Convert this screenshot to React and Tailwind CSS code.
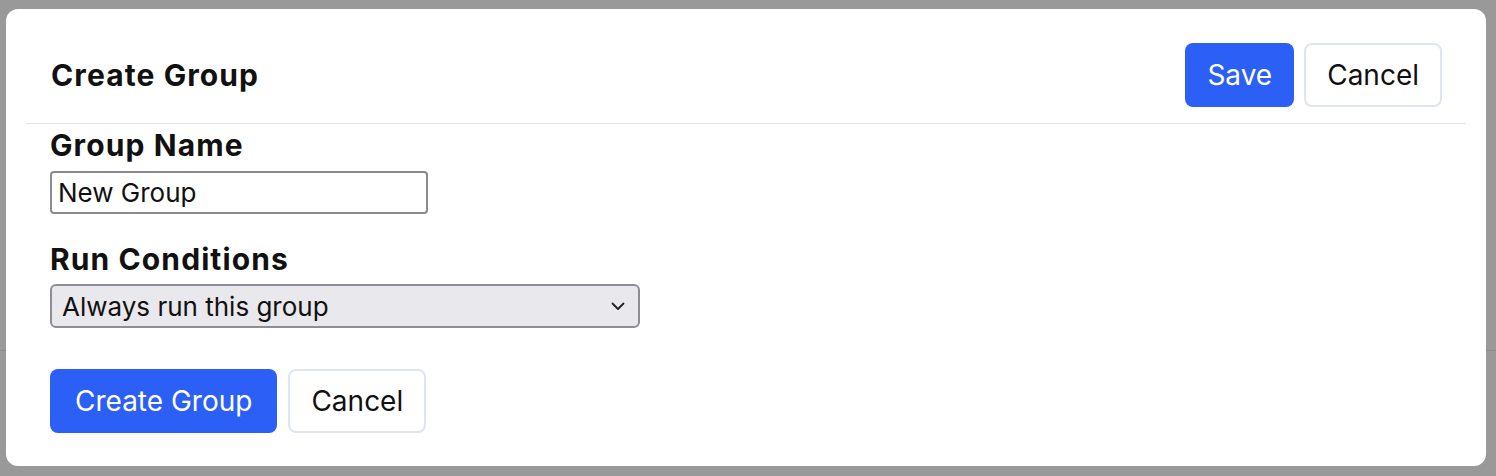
import React, { useState } from "react";

const font = { fontFamily: "Inter, 'Noto Sans', sans-serif" };

const Chevron = () => (
  <svg width="14" height="9" viewBox="0 0 14 9" fill="none" className="shrink-0">
    <path d="M1.5 1.5 L7 7 L12.5 1.5" stroke="#1f1f1f" strokeWidth="1.8" strokeLinecap="round" strokeLinejoin="round" />
  </svg>
);

export default function App() {
  const [name, setName] = useState("New Group");

  return (
    <div className="relative h-[476px] w-full overflow-hidden bg-[#999999]" style={font}>
      {/* page behind the modal */}
      <div className="h-[351px] border-b border-[#8c8c8c]" />

      {/* Modal */}
      <div className="absolute left-[6px] top-[9px] w-[1480px] h-[457px] bg-white rounded-[12px] px-[20px] flex flex-col">
        {/* Header */}
        <div className="flex items-center justify-between pl-[25px] pr-[24px] pt-[34px] pb-[16px] border-b border-[#e3e3e6]">
          <h2 className="text-[30px] leading-[36px] font-bold tracking-[1.1px] text-[#111]">Create Group</h2>
          <div className="flex items-center gap-[10px]">
            <button className="h-[64px] px-[22px] rounded-[8px] bg-[#2c5ff6] text-white text-[28px]">Save</button>
            <button className="h-[64px] px-[21px] rounded-[8px] bg-white border-2 border-[#e0e4f3] text-[#111] text-[28px]">
              Cancel
            </button>
          </div>
        </div>

        {/* Body */}
        <div className="px-[24px] pt-[3px]">
          <label className="block text-[30px] leading-[36px] font-bold tracking-[1.1px] text-[#111]">Group Name</label>
          <input
            value={name}
            onChange={(e) => setName(e.target.value)}
            className="mt-[8px] block w-[378px] h-[43px] px-[6px] border-2 border-[#8b8a93] rounded-[4px] text-[26px] text-[#111] outline-none"
          />

          <label className="block mt-[27px] text-[30px] leading-[36px] font-bold tracking-[1.1px] text-[#111]">
            Run Conditions
          </label>
          <div className="mt-[7px] w-[590px] h-[44px] flex items-center justify-between pl-[10px] pr-[13px] bg-[#e9e8ed] border-2 border-[#8e8d96] rounded-[6px]">
            <span className="text-[26px] text-[#111]">Always run this group</span>
            <Chevron />
          </div>

          <div className="mt-[41px] flex items-center gap-[11px]">
            <button className="h-[64px] px-[25px] rounded-[8px] bg-[#2c5ff6] text-white text-[28px]">Create Group</button>
            <button className="h-[64px] px-[21px] rounded-[8px] bg-white border-2 border-[#e0e4f3] text-[#111] text-[28px]">
              Cancel
            </button>
          </div>
        </div>
      </div>
    </div>
  );
}
